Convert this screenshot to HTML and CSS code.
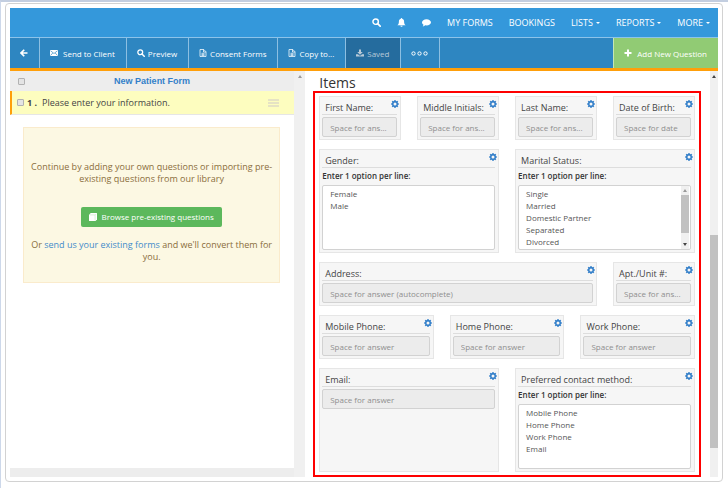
FILE: index.html
```html
<!DOCTYPE html>
<html lang="en">
<head>
<meta charset="utf-8">
<title>New Patient Form</title>
<link rel="stylesheet" href="styles.css">
</head>
<body>
<svg class="sprite" aria-hidden="true">
  <symbol id="gear" viewBox="0 0 16 16"><path fill-rule="evenodd" d="M6.8 0h2.4l.4 2.1 1.3.6 1.8-1.2 1.8 1.8-1.2 1.8.6 1.3 2.1.4v2.4l-2.1.4-.6 1.3 1.2 1.8-1.8 1.8-1.8-1.2-1.3.6-.4 2.1H6.800l-.4-2.100-1.300-.6-1.800 1.200-1.800-1.800 1.200-1.800-.6-1.300L0 9.200V6.800l2.100-.4.6-1.300-1.200-1.800 1.800-1.800 1.800 1.200 1.300-.6zM8 5a3 3 0 1 0 0 6 3 3 0 0 0 0-6z"/></symbol>
  <symbol id="search" viewBox="0 0 16 16"><circle cx="6.500" cy="6.500" r="4.800" fill="none" stroke="currentColor" stroke-width="2.600"/><path d="M10 10l4.500 4.500" stroke="currentColor" stroke-width="3" stroke-linecap="round"/></symbol>
  <symbol id="bell" viewBox="0 0 16 16"><path d="M8 0a1.200 1.200 0 0 1 1.200 1.400C11.500 2 12.600 4 12.600 6c0 3.500 1 5.500 2.900 7H.5c1.900-1.500 2.900-3.500 2.900-7 0-2 1.100-4 3.400-4.600A1.200 1.200 0 0 1 8 0zM6 13.600h4a2 2 0 0 1-4 0z"/></symbol>
  <symbol id="comment" viewBox="0 0 16 16"><path d="M8 2c4.400 0 8 2.500 8 5.600s-3.600 5.600-8 5.600c-.7 0-1.300 0-1.900-.2C4.500 14.400 2.800 15 1 15c.9-.9 1.500-1.800 1.700-3C1 11 0 9.400 0 7.600 0 4.500 3.600 2 8 2z"/></symbol>
  <symbol id="back" viewBox="0 0 16 16"><path d="M8.500 1.500L2 8l6.500 6.500M3 8h12" fill="none" stroke="currentColor" stroke-width="3.400"/></symbol>
  <symbol id="mail" viewBox="0 0 16 16"><path d="M0 2h16v12H0z"/><path d="M1 3.500l7 5.500 7-5.500M1 13l4.500-5M15 13l-4.500-5" fill="none" stroke="#2e86c1" stroke-width="1.400"/></symbol>
  <symbol id="doc" viewBox="0 0 14 16"><path d="M1 1h7.500L13 5.500V15H1zM8 1v5h5M4 8.500h6M4 10.700h6M4 12.900h6" fill="none" stroke="currentColor" stroke-width="1.500"/></symbol>
  <symbol id="save" viewBox="0 0 16 16"><path d="M6 1h4v5h3.500L8 11.500 2.500 6H6zM0 10.500h4l2.500 2.300h3L12 10.500h4V15H0z"/></symbol>
  <symbol id="dots" viewBox="0 0 51 15"><g fill="none" stroke="currentColor" stroke-width="3"><circle cx="7.500" cy="7.500" r="5"/><circle cx="25.500" cy="7.500" r="5"/><circle cx="43.500" cy="7.500" r="5"/></g></symbol>
  <symbol id="plus" viewBox="0 0 16 16"><path d="M6 1h4v5h5v4h-5v5H6v-5H1V6h5z"/></symbol>
  <symbol id="book" viewBox="0 0 16 16"><path d="M3.500 0H16v13L13 16H0V3.500z"/><path d="M1.500 3.800h10.700v11M12.200 3.800L15 1.500" fill="none" stroke="#b9e2b9" stroke-width="1"/></symbol>
</svg>

<div class="frame">
  <nav class="navbar">
    <button class="nav-icon" aria-label="Search"><svg class="icon"><use href="#search"/></svg></button>
    <button class="nav-icon" aria-label="Notifications"><svg class="icon"><use href="#bell"/></svg></button>
    <button class="nav-icon" aria-label="Messages"><svg class="icon"><use href="#comment"/></svg></button>
    <a href="#">MY FORMS</a>
    <a href="#">BOOKINGS</a>
    <a href="#">LISTS<span class="caret"></span></a>
    <a href="#">REPORTS<span class="caret"></span></a>
    <a href="#">MORE<span class="caret"></span></a>
  </nav>

  <div class="toolbar">
    <button class="tool" aria-label="Back"><svg class="icon"><use href="#back"/></svg></button>
    <button class="tool spaced"><svg class="icon"><use href="#mail"/></svg>Send to Client</button>
    <button class="tool"><svg class="icon"><use href="#search"/></svg>Preview</button>
    <button class="tool"><svg class="icon"><use href="#doc"/></svg>Consent Forms</button>
    <button class="tool"><svg class="icon"><use href="#doc"/></svg>Copy to...</button>
    <button class="tool saved"><svg class="icon"><use href="#save"/></svg>Saved</button>
    <button class="tool" aria-label="More actions"><svg class="icon dots"><use href="#dots"/></svg></button>
    <button class="tool spaced add"><svg class="icon"><use href="#plus"/></svg>Add New Question</button>
  </div>

  <div class="workspace">
    <aside class="sidebar">
      <div class="outline">
        <div class="outline-head">
          <input type="checkbox" class="tick" aria-label="Select all">
          <a href="#" class="form-name">New Patient Form</a>
        </div>
        <div class="question">
          <input type="checkbox" class="tick" id="q1">
          <label for="q1"><b>1 .</b>Please enter your information.</label>
          <span class="handle"></span>
        </div>
        <div class="hint">
          <p>Continue by adding your own questions or importing pre-existing questions from our library</p>
          <button class="browse"><svg class="icon"><use href="#book"/></svg>Browse pre-existing questions</button>
          <p>Or <a href="#">send us your existing forms</a> and we'll convert them for you.</p>
        </div>
        <div class="outline-foot"></div>
      </div>
      <div class="track side-track"><span class="arrow up faint"></span></div>
    </aside>

    <main class="editor">
      <h1>Items</h1>
      <div class="items">
        <section class="card w3"><label class="title" for="first">First Name:</label><input id="first" class="answer" placeholder="Space for ans..."><button class="cog" aria-label="Settings"><svg class="icon"><use href="#gear"/></svg></button></section>
        <section class="card w3"><label class="title" for="middle">Middle Initials:</label><input id="middle" class="answer" placeholder="Space for ans..."><button class="cog" aria-label="Settings"><svg class="icon"><use href="#gear"/></svg></button></section>
        <section class="card w3"><label class="title" for="last">Last Name:</label><input id="last" class="answer" placeholder="Space for ans..."><button class="cog" aria-label="Settings"><svg class="icon"><use href="#gear"/></svg></button></section>
        <section class="card w3"><label class="title" for="dob">Date of Birth:</label><input id="dob" class="answer" placeholder="Space for date"><button class="cog" aria-label="Settings"><svg class="icon"><use href="#gear"/></svg></button></section>

        <section class="card w6"><h2 class="title">Gender:</h2><label class="per-line" for="gender">Enter 1 option per line:</label>
          <div class="options"><textarea id="gender">Female
Male</textarea></div><button class="cog" aria-label="Settings"><svg class="icon"><use href="#gear"/></svg></button></section>
        <section class="card w6"><h2 class="title">Marital Status:</h2><label class="per-line" for="marital">Enter 1 option per line:</label>
          <div class="options"><textarea id="marital">Single
Married
Domestic Partner
Separated
Divorced
Widowed</textarea><div class="track list-track"><span class="arrow up faint"></span><span class="thumb"></span><span class="arrow down"></span></div></div><button class="cog" aria-label="Settings"><svg class="icon"><use href="#gear"/></svg></button></section>

        <section class="card w9"><label class="title" for="address">Address:</label><input id="address" class="answer" placeholder="Space for answer (autocomplete)"><button class="cog" aria-label="Settings"><svg class="icon"><use href="#gear"/></svg></button></section>
        <section class="card w3"><label class="title" for="unit">Apt./Unit #:</label><input id="unit" class="answer" placeholder="Space for ans..."><button class="cog" aria-label="Settings"><svg class="icon"><use href="#gear"/></svg></button></section>

        <section class="card w4"><label class="title" for="mobile">Mobile Phone:</label><input id="mobile" class="answer" placeholder="Space for answer"><button class="cog" aria-label="Settings"><svg class="icon"><use href="#gear"/></svg></button></section>
        <section class="card w4"><label class="title" for="home">Home Phone:</label><input id="home" class="answer" placeholder="Space for answer"><button class="cog" aria-label="Settings"><svg class="icon"><use href="#gear"/></svg></button></section>
        <section class="card w4"><label class="title" for="work">Work Phone:</label><input id="work" class="answer" placeholder="Space for answer"><button class="cog" aria-label="Settings"><svg class="icon"><use href="#gear"/></svg></button></section>

        <section class="card w6"><label class="title" for="email">Email:</label><input id="email" class="answer" placeholder="Space for answer"><button class="cog" aria-label="Settings"><svg class="icon"><use href="#gear"/></svg></button></section>
        <section class="card w6"><h2 class="title">Preferred contact method:</h2><label class="per-line" for="contact">Enter 1 option per line:</label>
          <div class="options"><textarea id="contact">Mobile Phone
Home Phone
Work Phone
Email</textarea></div><button class="cog" aria-label="Settings"><svg class="icon"><use href="#gear"/></svg></button></section>
      </div>
    </main>
    <div class="track page-track"><span class="arrow up"></span><span class="thumb"></span></div>
  </div>
</div>
</body>
</html>
```
FILE: styles.css
```css
* { box-sizing: border-box; }

body {
  margin: 0;
  min-height: 100vh;
  padding: 1px 5px 6px 4px;
  border-top: 2px solid #c3cee0;
  border-left: 1px solid #cdd8ea;
  background: #fff;
  font-family: "Open Sans", "Noto Sans", sans-serif;
  font-size: 9px;
  color: #444;
  display: flex;
}

button, input, textarea { font: inherit; color: inherit; margin: 0; }
button { border: 0; padding: 0; background: none; }
a { color: #428bca; text-decoration: none; }
.sprite { display: none; }
.icon { display: block; width: 8px; height: 8px; fill: currentColor; flex: none; }

.frame {
  flex: 1;
  min-width: 0;
  display: flex;
  flex-direction: column;
  border: 1px solid #d2d2d2;
  border-radius: 4px;
  padding: 4px;
}

.navbar {
  height: 29px;
  flex: none;
  display: flex;
  align-items: center;
  justify-content: flex-end;
  gap: 16px;
  padding-right: 8px;
  background: #3498db;
  color: #fff;
}
.navbar a { color: #fff; display: flex; align-items: center; gap: 3px; }
.nav-icon .icon { width: 9px; height: 9px; }
.caret { border: 2px solid transparent; border-top-color: #fff; border-bottom: 0; }

.toolbar {
  height: 34px;
  flex: none;
  display: flex;
  background: #2e86c1;
  border-top: 1px solid #8cc3ea;
  border-bottom: 3px solid #ff9f0a;
  color: #fff;
  font-size: 8px;
}
.tool {
  display: flex;
  align-items: center;
  gap: 3px;
  padding: 0 11px 0 10px;
  border-right: 1px solid #8cbfe2;
}
.tool.spaced { gap: 5px; }
.saved { background: #256c9e; color: #b9cad8; }
.dots { width: 17px; height: 5px; }
.add { margin-left: auto; border-right: 0; border-left: 1px solid #c5e6b5; background: #91cb74; }

.workspace { flex: 1; display: flex; }

.sidebar { flex: 0 0 41.7%; display: flex; }
.outline { flex: 1; min-width: 0; display: flex; flex-direction: column; }
.tick {
  appearance: none;
  width: 7px;
  height: 7px;
  flex: none;
  border: 1px solid #b2b2b2;
  border-radius: 1px;
  background: #e4e4e4;
}
.outline-head {
  height: 20px;
  display: flex;
  align-items: center;
  padding-left: 8px;
  background: #ededed;
}
.form-name {
  flex: 1;
  text-align: center;
  padding-right: 15px;
  font-family: "Liberation Sans", Arial, sans-serif;
  font-weight: 700;
  color: #337fc9;
}
.question {
  height: 24px;
  display: flex;
  align-items: center;
  padding: 0 15px 0 5px;
  background: #fdfdbf;
  border-left: 2px solid #ff9f0a;
  border-bottom: 1px solid #e6e6e6;
}
.question label { flex: 1; display: flex; gap: 5px; padding-left: 3px; }
.handle { width: 11px; height: 8px; border-top: 2px solid #e6e3c4; border-bottom: 2px solid #e6e3c4; display: flex; align-items: center; }
.handle::after { content: ""; flex: 1; height: 2px; background: #e6e3c4; }

.hint {
  margin: 12px 14px 0 13px;
  padding: 33px 4px 19px;
  border: 1px solid #faebcc;
  background: #fcf8e3;
  color: #8a6d3b;
  text-align: center;
  line-height: 12px;
}
.hint p { margin: 0; }
.browse {
  display: inline-flex;
  align-items: center;
  gap: 4px;
  height: 20px;
  padding: 0 8px;
  margin: 22px 0 12px;
  border-radius: 2px;
  background: #5cb85c;
  color: #fff;
  font-size: 8px;
}
.outline-foot { margin-top: auto; height: 9px; background: #ededed; }

.track { background: #f0f0f0; display: flex; flex-direction: column; align-items: center; flex: none; }
.arrow { border: 2px solid transparent; flex: none; }
.up { border-bottom: 3px solid #444; border-top: 0; }
.down { border-top: 3px solid #444; border-bottom: 0; margin-top: auto; }
.up.faint { border-bottom-color: #999; }
.thumb { width: 100%; background: #c1c1c1; }
.side-track { width: 11px; padding-top: 4px; }
.page-track { width: 8px; padding-top: 4px; }
.page-track .thumb { height: 53%; margin-top: 157px; }

.editor { flex: 1; min-width: 0; padding: 4px 9px 0 8px; }
h1 { margin: 0 0 0 6px; font-size: 14px; line-height: 16px; font-weight: 400; color: #333; }
.items {
  border: 2px solid #fe0000;
  padding: 3px 4px;
  display: grid;
  grid-template-columns: repeat(12, minmax(0, 1fr));
  gap: 9px 16px;
}
.w3 { grid-column: span 3; }
.w4 { grid-column: span 4; }
.w6 { grid-column: span 6; }
.w9 { grid-column: span 9; }

.card {
  position: relative;
  min-width: 0;
  padding: 4px 3px 2px 2px;
  border: 1px solid #e6e6e6;
  background: #f6f6f6;
}
.title {
  display: block;
  margin: 0 0 2px;
  padding-left: 3px;
  font-size: 9px;
  font-weight: 400;
  line-height: 13px;
  border-bottom: 1px solid #ddd;
}
.answer {
  display: block;
  width: 100%;
  height: 20px;
  padding: 0 7px;
  border: 1px solid #d2d2d2;
  border-radius: 2px;
  background: #ececec;
  font-size: 8px;
}
.answer::placeholder { color: #8f8f8f; opacity: 1; }
.cog { position: absolute; top: 3px; right: 1px; color: #337fc9; }
.per-line { display: block; font-size: 8px; font-weight: 600; line-height: 12px; margin: 2px 0 3px; color: #333; }
.options { display: flex; height: 65px; border: 1px solid #d2d2d2; border-radius: 2px; background: #fff; }
.options textarea {
  display: block;
  flex: 1;
  min-width: 0;
  height: 100%;
  padding: 2px 7px 0;
  border: 0;
  background: none;
  resize: none;
  overflow: hidden;
  font-size: 8px;
  line-height: 12px;
  color: #555;
}
.list-track { width: 8px; margin-right: 1px; padding: 3px 0; }
.list-track .thumb { height: 38px; margin-top: 3px; }
```
